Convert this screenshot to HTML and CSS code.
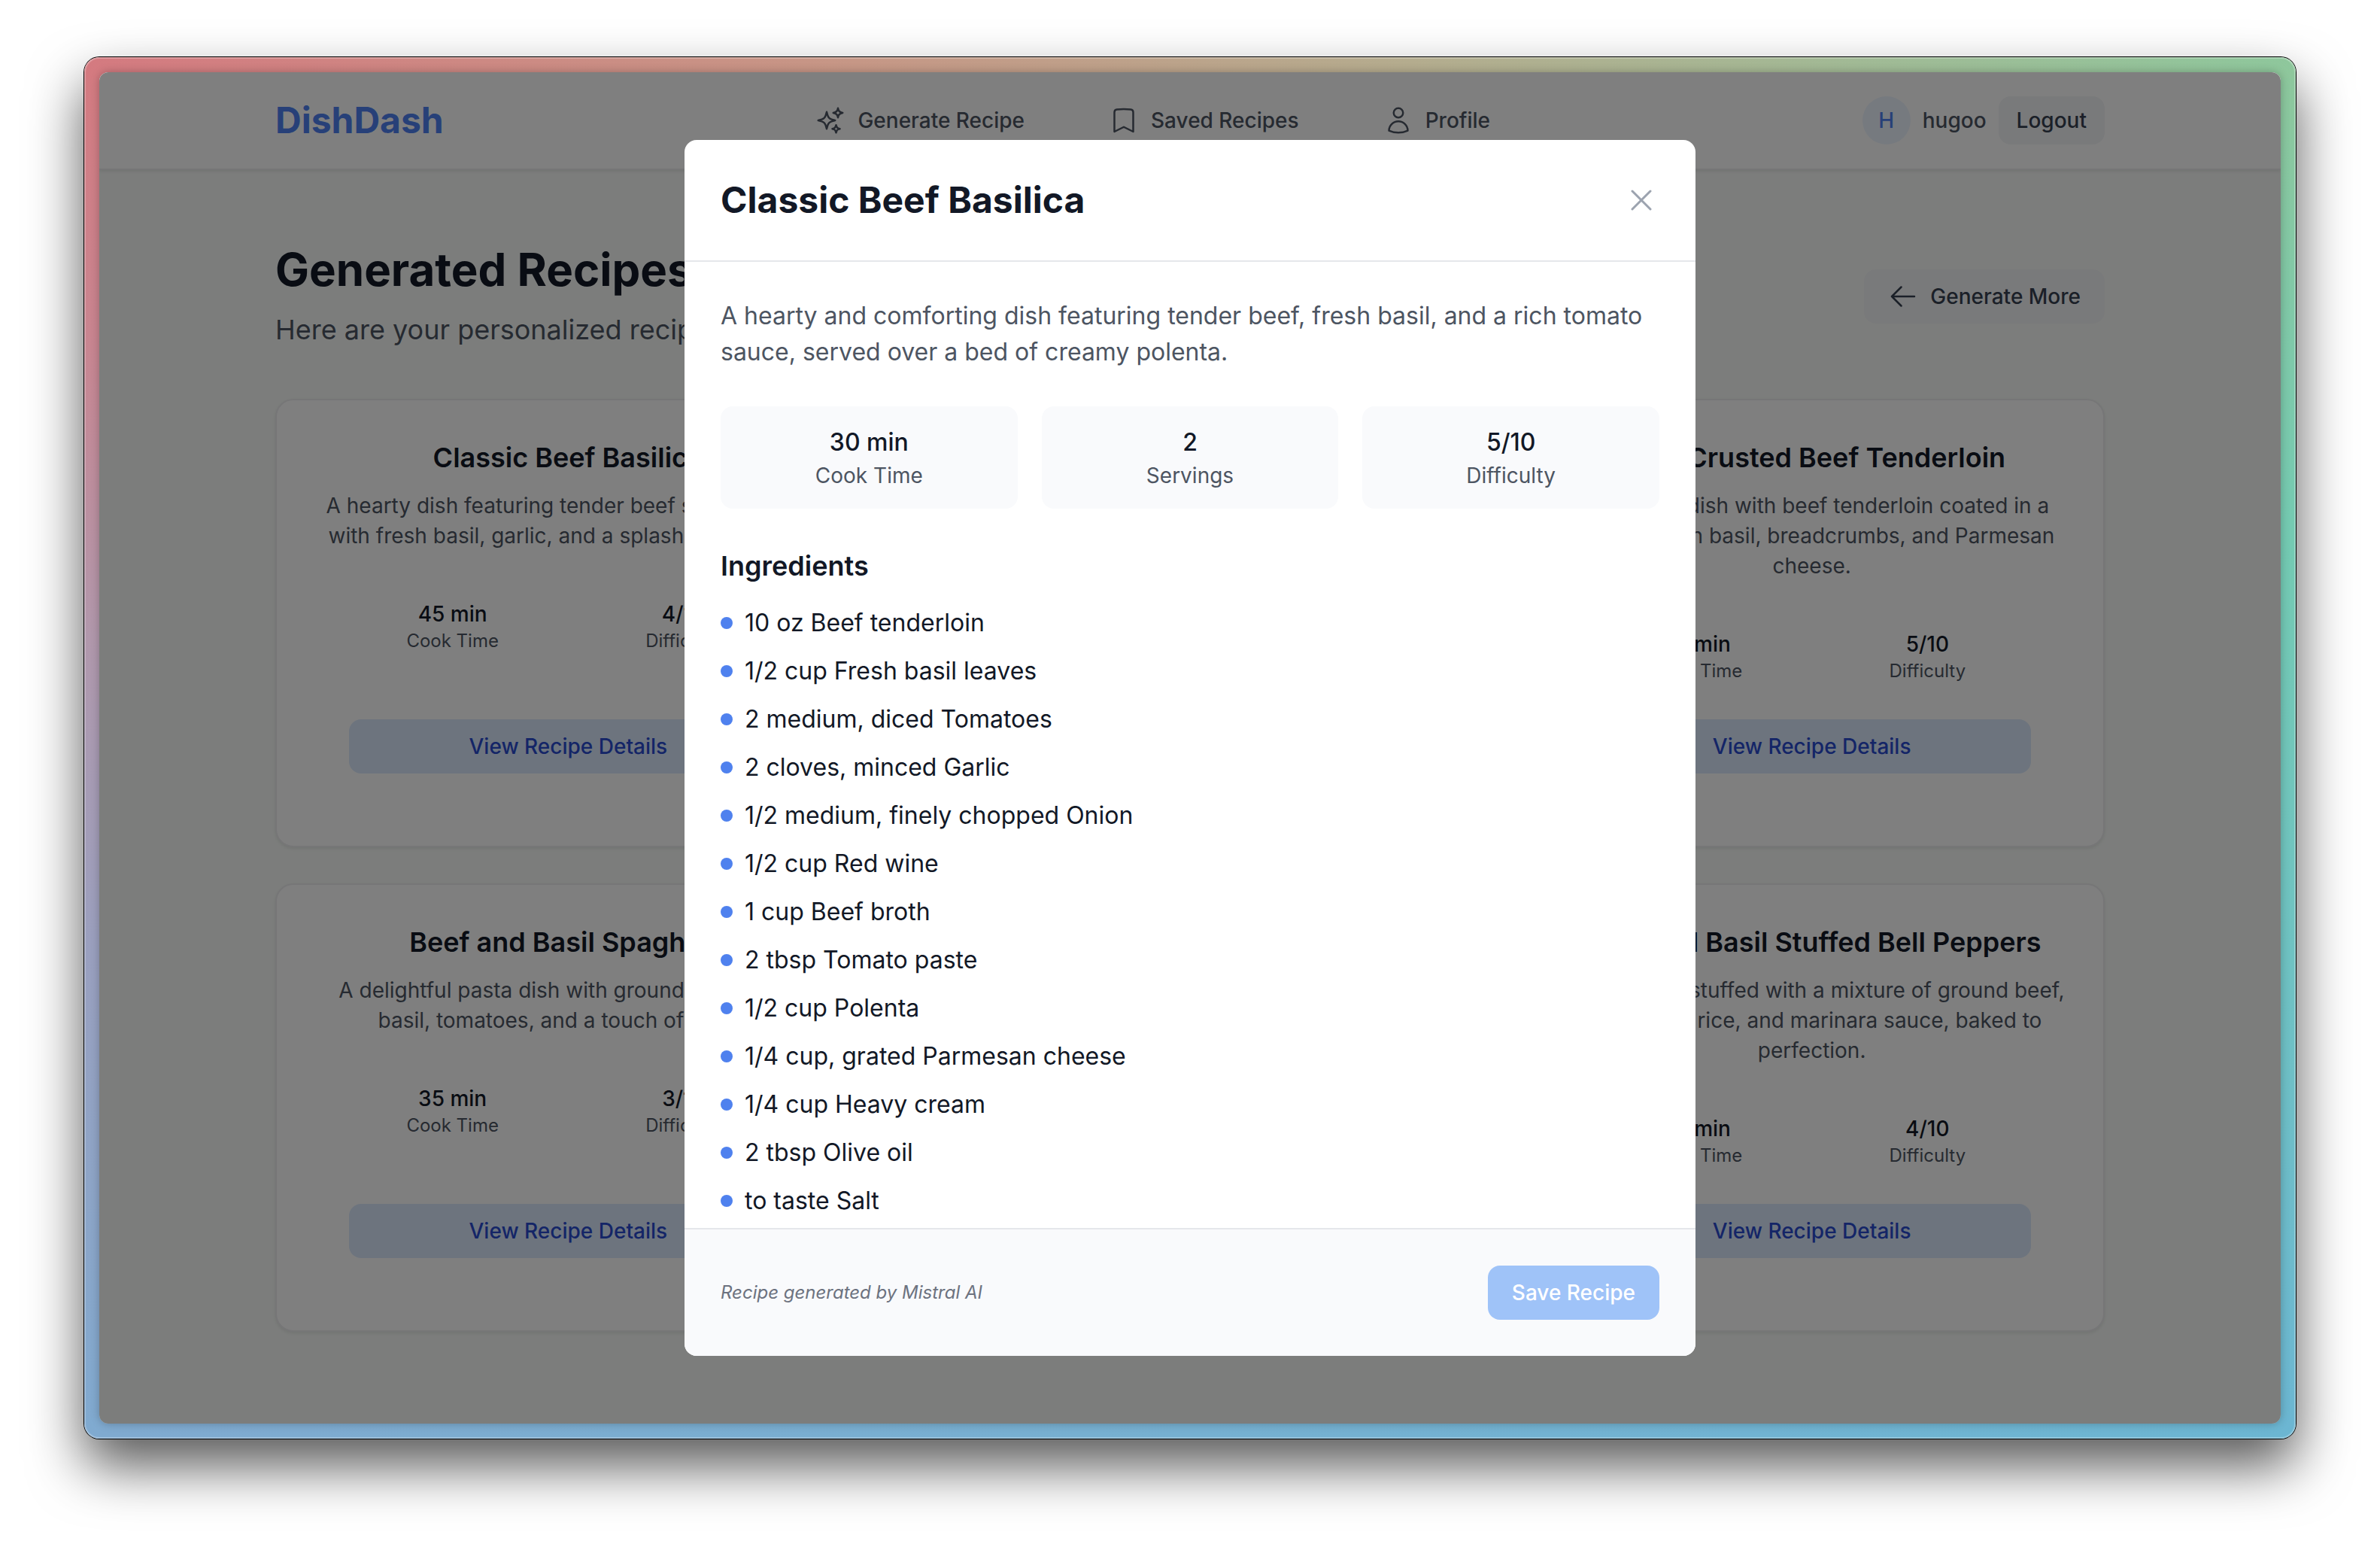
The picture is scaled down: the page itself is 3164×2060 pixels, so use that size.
FILE: index.html
```html
<!DOCTYPE html>
<html lang="en">
<head>
<meta charset="utf-8">
<meta name="viewport" content="width=device-width, initial-scale=1">
<title>DishDash – Generated Recipes</title>
<link rel="stylesheet" href="styles.css">
</head>
<body>
<div class="window">
  <div class="app">
    <header class="topbar">
      <div class="topbar-inner">
        <a class="logo" href="#">DishDash</a>
        <nav class="nav">
          <a class="nav-link" href="#">
            <svg class="icon" viewBox="0 0 24 24" aria-hidden="true"><path d="M9.813 15.904 9 18.75l-.813-2.846a4.5 4.5 0 0 0-3.09-3.09L2.25 12l2.846-.813a4.5 4.5 0 0 0 3.09-3.09L9 5.25l.813 2.846a4.5 4.5 0 0 0 3.09 3.09L15.75 12l-2.846.813a4.5 4.5 0 0 0-3.09 3.09ZM18.259 8.715 18 9.75l-.259-1.035a3.375 3.375 0 0 0-2.455-2.456L14.25 6l1.036-.259a3.375 3.375 0 0 0 2.455-2.456L18 2.25l.259 1.035a3.375 3.375 0 0 0 2.456 2.456L21.75 6l-1.035.259a3.375 3.375 0 0 0-2.456 2.456ZM16.894 20.567 16.5 21.75l-.394-1.183a2.25 2.25 0 0 0-1.423-1.423L13.5 18.75l1.183-.394a2.25 2.25 0 0 0 1.423-1.423l.394-1.183.394 1.183a2.25 2.25 0 0 0 1.423 1.423l1.183.394-1.183.394a2.25 2.25 0 0 0-1.423 1.423Z"/></svg>
            Generate Recipe
          </a>
          <a class="nav-link" href="#">
            <svg class="icon" viewBox="0 0 24 24" aria-hidden="true"><path d="M17.593 3.322c1.1.128 1.907 1.077 1.907 2.185V21L12 17.25 4.5 21V5.507c0-1.108.806-2.057 1.907-2.185a48.507 48.507 0 0 1 11.186 0Z"/></svg>
            Saved Recipes
          </a>
          <a class="nav-link" href="#">
            <svg class="icon" viewBox="0 0 24 24" aria-hidden="true"><path d="M15.75 6a3.75 3.75 0 1 1-7.5 0 3.75 3.75 0 0 1 7.5 0ZM4.501 20.118a7.5 7.5 0 0 1 14.998 0A17.933 17.933 0 0 1 12 21.75c-2.676 0-5.216-.584-7.499-1.632Z"/></svg>
            Profile
          </a>
        </nav>
        <div class="user">
          <span class="avatar">H</span>
          <span class="user-name">hugoo</span>
          <button class="btn btn-small" type="button">Logout</button>
        </div>
      </div>
    </header>

    <main class="page">
      <div class="page-head">
        <div>
          <h1 class="page-title">Generated Recipes</h1>
          <p class="page-subtitle">Here are your personalized recipes</p>
        </div>
        <button class="btn" type="button">
          <svg class="icon" viewBox="0 0 24 24" aria-hidden="true"><path d="M10.5 19.5 3 12m0 0 7.5-7.5M3 12h18"/></svg>
          Generate More
        </button>
      </div>

      <div class="cards">
        <article class="card">
          <h2 class="card-title">Classic Beef Basilica</h2>
          <p class="card-text">A hearty dish featuring tender beef slow-cooked with fresh basil, garlic, and a splash of red wine.</p>
          <div class="card-stats">
            <div><p class="stat-value">45 min</p><p class="stat-label">Cook Time</p></div>
            <div><p class="stat-value">4/10</p><p class="stat-label">Difficulty</p></div>
          </div>
          <button class="btn btn-view" type="button">View Recipe Details</button>
        </article>
        <article class="card"></article>
        <article class="card">
          <h2 class="card-title">Basil Crusted Beef Tenderloin</h2>
          <p class="card-text">An elegant dish with beef tenderloin coated in a crust of fresh basil, breadcrumbs, and Parmesan cheese.</p>
          <div class="card-stats">
            <div><p class="stat-value">50 min</p><p class="stat-label">Cook Time</p></div>
            <div><p class="stat-value">5/10</p><p class="stat-label">Difficulty</p></div>
          </div>
          <button class="btn btn-view" type="button">View Recipe Details</button>
        </article>
        <article class="card">
          <h2 class="card-title">Beef and Basil Spaghetti</h2>
          <p class="card-text">A delightful pasta dish with ground beef, fresh basil, tomatoes, and a touch of cream.</p>
          <div class="card-stats">
            <div><p class="stat-value">35 min</p><p class="stat-label">Cook Time</p></div>
            <div><p class="stat-value">3/10</p><p class="stat-label">Difficulty</p></div>
          </div>
          <button class="btn btn-view" type="button">View Recipe Details</button>
        </article>
        <article class="card"></article>
        <article class="card">
          <h2 class="card-title">Beef and Basil Stuffed Bell Peppers</h2>
          <p class="card-text">Bell peppers stuffed with a mixture of ground beef, fresh basil, rice, and marinara sauce, baked to perfection.</p>
          <div class="card-stats">
            <div><p class="stat-value">45 min</p><p class="stat-label">Cook Time</p></div>
            <div><p class="stat-value">4/10</p><p class="stat-label">Difficulty</p></div>
          </div>
          <button class="btn btn-view" type="button">View Recipe Details</button>
        </article>
      </div>
    </main>

    <div class="overlay">
      <section class="modal" role="dialog" aria-modal="true" aria-labelledby="recipe-title">
        <header class="modal-head">
          <h2 class="modal-title" id="recipe-title">Classic Beef Basilica</h2>
          <button class="close" type="button" aria-label="Close">
            <svg class="icon icon-large" viewBox="0 0 24 24" aria-hidden="true"><path d="M6 18 18 6M6 6l12 12"/></svg>
          </button>
        </header>
        <div class="modal-body">
          <p class="summary">A hearty and comforting dish featuring tender beef, fresh basil, and a rich tomato sauce, served over a bed of creamy polenta.</p>
          <div class="facts">
            <div class="fact"><p class="fact-value">30 min</p><p class="fact-label">Cook Time</p></div>
            <div class="fact"><p class="fact-value">2</p><p class="fact-label">Servings</p></div>
            <div class="fact"><p class="fact-value">5/10</p><p class="fact-label">Difficulty</p></div>
          </div>
          <h3 class="section-title">Ingredients</h3>
          <ul class="ingredients">
            <li>10 oz Beef tenderloin</li>
            <li>1/2 cup Fresh basil leaves</li>
            <li>2 medium, diced Tomatoes</li>
            <li>2 cloves, minced Garlic</li>
            <li>1/2 medium, finely chopped Onion</li>
            <li>1/2 cup Red wine</li>
            <li>1 cup Beef broth</li>
            <li>2 tbsp Tomato paste</li>
            <li>1/2 cup Polenta</li>
            <li>1/4 cup, grated Parmesan cheese</li>
            <li>1/4 cup Heavy cream</li>
            <li>2 tbsp Olive oil</li>
            <li>to taste Salt</li>
          </ul>
        </div>
        <footer class="modal-foot">
          <p class="credit">Recipe generated by Mistral AI</p>
          <button class="btn btn-save" type="button" disabled>Save Recipe</button>
        </footer>
      </section>
    </div>
  </div>
</div>
</body>
</html>
```
FILE: styles.css
```css
* {
  box-sizing: border-box;
  margin: 0;
  padding: 0;
}

body {
  min-height: 100vh;
  padding: 76px 112px 148px;
  display: flex;
  background: #fff;
  color: #121826;
  font-family: Inter, "Liberation Sans", sans-serif;
  font-size: 28px;
  line-height: 40px;
}

/* Window frame */
.window {
  flex: 1;
  display: flex;
  padding: 20px;
  border-radius: 20px;
  background:
    linear-gradient(to right, #d47a80, #c69786 35%, #b4ac8e 60%, #8ec79c) top / 100% 28px no-repeat,
    linear-gradient(to right, #80aad0, #6cb6d2) bottom / 100% 28px no-repeat,
    linear-gradient(to bottom, #d47a80, #c98590 20%, #b198ac 42%, #9aa0bf 65%, #80aad0) left / 40px 100% no-repeat,
    linear-gradient(to bottom, #8ec79c, #74cab2 35%, #6fc2c2 65%, #6cb6d2) right / 40px 100% no-repeat;
  box-shadow:
    inset 0 0 0 2px rgba(255, 255, 255, .25),
    0 0 0 1px #000,
    0 36px 72px rgba(0, 0, 0, .66);
}

.app {
  position: relative;
  flex: 1;
  overflow: hidden;
  border-radius: 12px;
  background: #f8fbf8;
  box-shadow: 0 0 12px rgba(0, 0, 0, .25);
}

.icon {
  width: 40px;
  height: 40px;
  flex: none;
  fill: none;
  stroke: currentColor;
  stroke-width: 1.5;
  stroke-linecap: round;
  stroke-linejoin: round;
}

.icon-large {
  width: 48px;
  height: 48px;
}

/* Buttons */
.btn {
  display: flex;
  align-items: center;
  justify-content: center;
  gap: 16px;
  padding: 16px 32px;
  border: 0;
  border-radius: 16px;
  background: #f3f4f6;
  color: #374151;
  font: 500 28px/40px Inter, "Liberation Sans", sans-serif;
}

.btn-small {
  padding: 12px 24px;
}

.btn-view {
  margin: auto 48px 48px;
  background: #dbe9fd;
  color: #294acf;
}

.btn-save {
  background: #9fc3f8;
  color: #fff;
}

/* Top bar */
.topbar {
  background: #fff;
  border-bottom: 2px solid #ececee;
  box-shadow: 0 2px 4px rgba(0, 0, 0, .08);
}

.topbar-inner,
.page {
  max-width: 2560px;
  margin: 0 auto;
  padding: 0 64px;
}

.topbar-inner {
  min-height: 128px;
  display: flex;
  align-items: center;
  justify-content: space-between;
}

.logo {
  color: #4f81f1;
  font-size: 48px;
  font-weight: 700;
  line-height: 64px;
  text-decoration: none;
}

.nav {
  display: flex;
  gap: 64px;
}

.nav-link {
  display: flex;
  align-items: center;
  gap: 16px;
  padding: 0 24px;
  color: #4d5562;
  font-weight: 500;
  text-decoration: none;
}

.user {
  display: flex;
  align-items: center;
  gap: 16px;
}

.avatar {
  width: 64px;
  height: 64px;
  display: grid;
  place-items: center;
  border-radius: 50%;
  background: #edf4fe;
  color: #4f81f1;
  font-weight: 500;
}

.user-name {
  color: #4d5562;
  font-weight: 500;
}

/* Page */
.page {
  padding-top: 96px;
}

.page-head {
  display: flex;
  align-items: center;
  justify-content: space-between;
  margin-bottom: 64px;
}

.page-title {
  margin-bottom: 16px;
  font-size: 60px;
  font-weight: 700;
  line-height: 72px;
}

.page-subtitle {
  color: #4d5562;
  font-size: 36px;
  line-height: 56px;
}

.cards {
  display: grid;
  grid-template-columns: repeat(3, minmax(0, 1fr));
  gap: 48px;
}

.card {
  display: flex;
  flex-direction: column;
  padding: 48px;
  border: 2px solid #ececee;
  border-radius: 24px;
  background: #fff;
  box-shadow: 0 2px 4px rgba(0, 0, 0, .08);
  text-align: center;
}

.card-title {
  margin-bottom: 16px;
  font-size: 36px;
  font-weight: 600;
  line-height: 56px;
}

.card-text {
  color: #4d5562;
}

.card-stats {
  display: grid;
  grid-template-columns: 1fr 1fr;
  gap: 32px;
  padding: 64px 48px 48px;
}

.stat-value {
  font-weight: 500;
}

.stat-label {
  color: #4d5562;
  font-size: 24px;
  line-height: 32px;
}

/* Recipe dialog */
.overlay {
  position: absolute;
  inset: 0;
  display: flex;
  align-items: center;
  justify-content: center;
  background: rgba(0, 0, 0, .5);
}

.modal {
  width: 100%;
  max-width: 1344px;
  height: 90%;
  display: flex;
  flex-direction: column;
  overflow: hidden;
  border-radius: 16px;
  background: #fff;
}

.modal-head {
  display: flex;
  align-items: center;
  justify-content: space-between;
  padding: 48px;
  border-bottom: 2px solid #e5e7eb;
}

.modal-title {
  font-size: 48px;
  font-weight: 700;
  line-height: 64px;
}

.close {
  display: flex;
  border: 0;
  background: none;
  color: #9ca3af;
}

.modal-body {
  flex: 1;
  min-height: 0;
  overflow: hidden;
  padding: 48px 48px 0;
  font-size: 32px;
  line-height: 48px;
}

.summary {
  margin-bottom: 48px;
  color: #4d5562;
}

.facts {
  display: grid;
  grid-template-columns: repeat(3, 1fr);
  gap: 32px;
  margin-bottom: 48px;
}

.fact {
  padding: 24px;
  border-radius: 16px;
  background: #f9fafc;
  text-align: center;
}

.fact-value {
  font-weight: 500;
}

.fact-label {
  color: #4d5562;
  font-size: 28px;
  line-height: 40px;
}

.section-title {
  margin-bottom: 24px;
  font-size: 36px;
  font-weight: 600;
  line-height: 56px;
}

.ingredients {
  display: grid;
  gap: 16px;
  list-style: none;
}

.ingredients li {
  display: flex;
  align-items: center;
  gap: 16px;
}

.ingredients li::before {
  content: "";
  width: 16px;
  height: 16px;
  border-radius: 50%;
  background: #4f81ee;
}

.modal-foot {
  display: flex;
  align-items: center;
  justify-content: space-between;
  padding: 48px;
  border-top: 2px solid #e5e7eb;
  background: #f9fafc;
}

.credit {
  color: #6c727f;
  font-size: 24px;
  font-style: italic;
  line-height: 32px;
}
```
